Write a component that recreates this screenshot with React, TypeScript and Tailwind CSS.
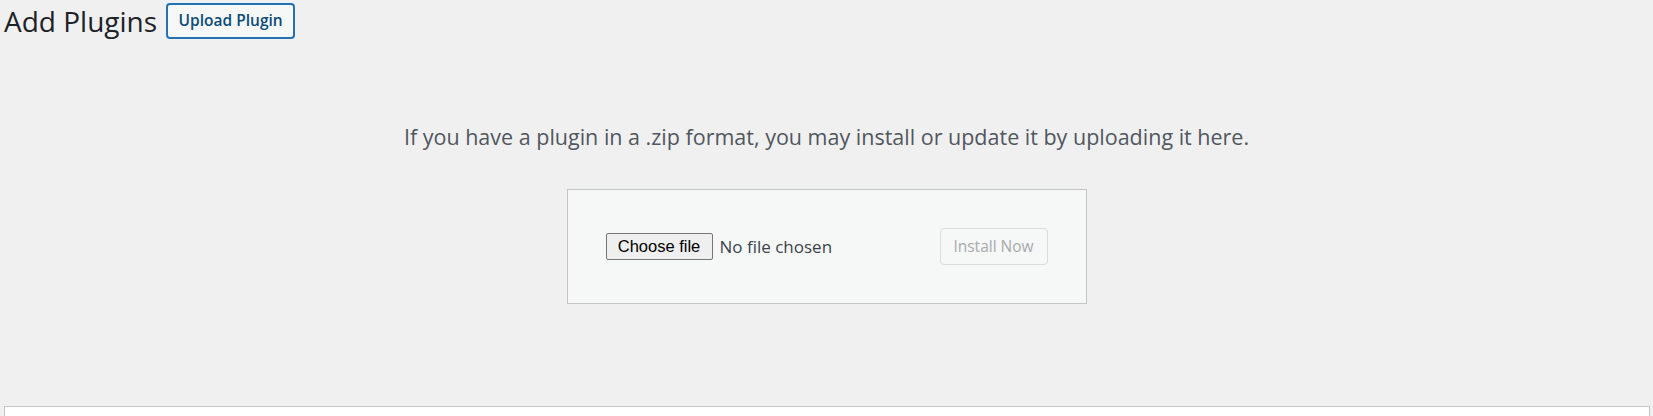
export default function App() {
  return (
    <div className="h-screen w-full overflow-hidden bg-[#f0f0f1] font-['Open_Sans',sans-serif]">
      {/* Heading */}
      <div className="flex h-[42px] items-center pl-[4px]">
        <h1 className="text-[28px] leading-none font-normal text-[#1d2327]">Add Plugins</h1>
        <button className="ml-[9px] h-[36px] w-[129px] rounded-[4px] border-2 border-[#2271b1] bg-[#f6f7f7] text-[15.5px] font-semibold text-[#0a4b78]">
          Upload Plugin
        </button>
      </div>

      {/* Upload panel */}
      <div className="flex flex-col items-center">
        <p className="mt-[80px] text-[21.5px] leading-[30px] text-[#50575e]">
          If you have a plugin in a .zip format, you may install or update it by uploading it here.
        </p>
        <form className="mt-[37px] flex h-[115px] w-[520px] items-center justify-between border border-[#c3c4c7] bg-[#f6f7f7] px-[38px]">
          <div className="flex items-center">
            <span className="flex h-[27px] w-[107px] items-center justify-center rounded-[2px] border border-[#767676] bg-[#efefef] font-['Liberation_Sans',sans-serif] text-[16.5px] text-black">
              Choose file
            </span>
            <span className="ml-[7px] text-[17px] text-[#3c434a]">No file chosen</span>
          </div>
          <button
            type="button"
            disabled
            className="h-[37px] w-[108px] rounded-[4px] border border-[#dcdcde] bg-[#f6f7f7] text-[15.5px] text-[#a7aaad]"
          >
            Install Now
          </button>
        </form>
      </div>

      {/* Plugin list panel */}
      <div className="mt-[102px] ml-[4px] mr-[3px] h-[40px] border border-[#c3c4c7] bg-white" />
    </div>
  );
}
